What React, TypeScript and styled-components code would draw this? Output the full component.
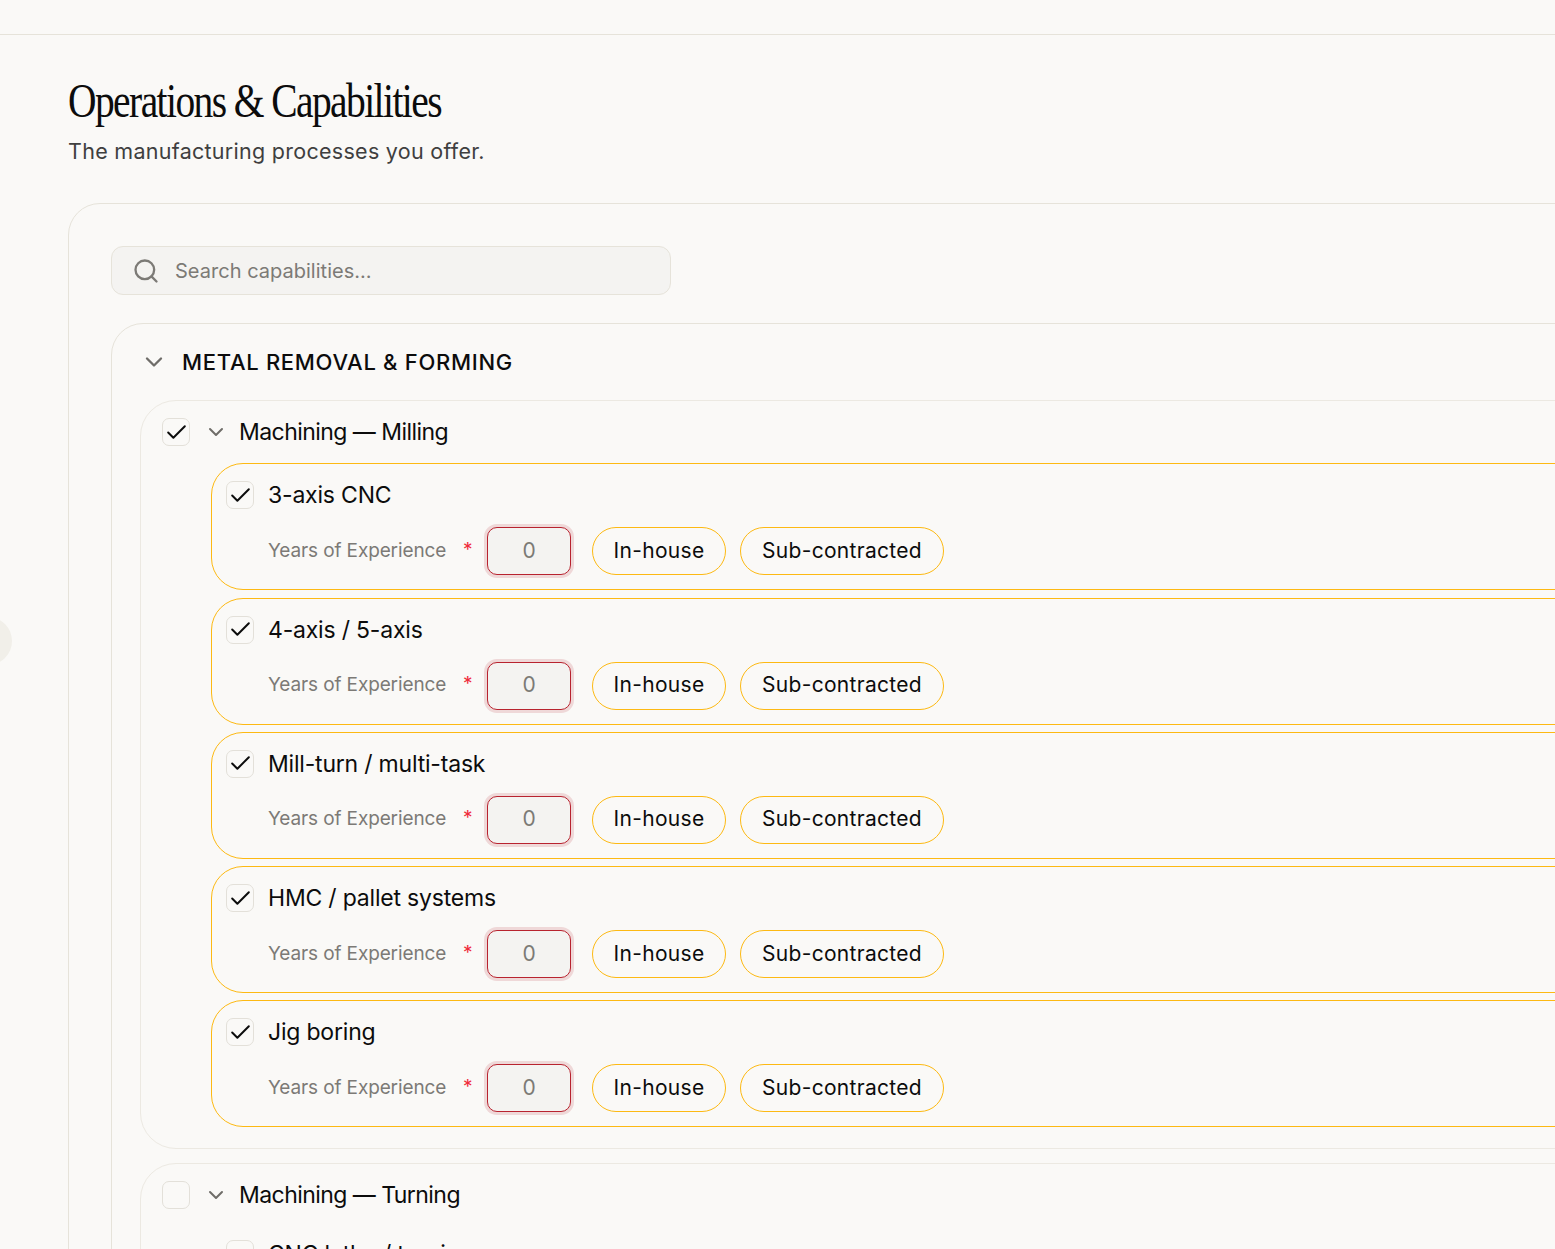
import { createGlobalStyle, styled } from 'styled-components'
import { Check, ChevronDown, Search } from 'lucide-react'

const GlobalStyle = createGlobalStyle`
  html, body {
    margin: 0;
    height: 100%;
    overflow: hidden;
    background: #faf9f7;
  }
  * {
    box-sizing: border-box;
  }
`

const Page = styled.div`
  width: 1900px;
  height: 1249px;
  overflow: hidden;
  color: #0c0c0c;
  font-family: Inter, 'Noto Sans', sans-serif;
`

const TopBar = styled.header`
  height: 35px;
  border-bottom: 1px solid #e6e3da;
`

const SideHandle = styled.span`
  position: absolute;
  left: -36px;
  top: 617px;
  width: 48px;
  height: 48px;
  border-radius: 50%;
  background: #f1efe9;
`

const Main = styled.main`
  padding: 40px 68px 0;
`

const Title = styled.h1`
  margin: 0;
  font-family: 'Liberation Serif', serif;
  font-size: 48px;
  font-weight: 400;
  line-height: 52px;
  letter-spacing: -1.9px;
  transform: scaleX(0.822);
  transform-origin: left center;
  white-space: nowrap;
`

const Subtitle = styled.p`
  margin: 10px 0 0;
  font-size: 21.5px;
  line-height: 28px;
  letter-spacing: 0.28px;
  color: #3f3f3f;
`

const Panel = styled.section`
  margin-top: 38px;
  padding: 42px 42px 0;
  border: 1px solid #e6e3da;
  border-radius: 32px;
`

const SearchBox = styled.label`
  width: 560px;
  height: 49px;
  padding: 0 20px;
  display: flex;
  align-items: center;
  gap: 15px;
  border: 1px solid #e6e3da;
  border-radius: 12px;
  background: #f4f3f1;
  color: #7c7a76;

  svg {
    flex: none;
  }
`

const SearchInput = styled.input`
  flex: 1;
  min-width: 0;
  border: 0;
  padding: 0;
  outline: none;
  background: transparent;
  font: inherit;
  font-size: 20px;
  letter-spacing: 0.02px;

  &::placeholder {
    color: #7c7a76;
    opacity: 1;
  }
`

const Section = styled.section`
  margin-top: 28px;
  padding: 0 28px;
  border: 1px solid #e6e3da;
  border-radius: 32px;
`

const SectionHeader = styled.div`
  height: 76px;
  display: flex;
  align-items: center;
  gap: 14px;
  color: #6f6d69;
`

const SectionTitle = styled.h2`
  margin: 0;
  font-size: 22px;
  font-weight: 500;
  letter-spacing: 0.7px;
  color: #0c0c0c;
`

const Group = styled.div`
  margin-bottom: 14px;
  padding: 0 0 20.6px 21px;
  border: 1px solid #ece9e2;
  border-radius: 36px;
`

const GroupHeader = styled.div`
  height: 62.4px;
  display: flex;
  align-items: center;
  color: #6f6d69;
`

const GroupChevron = styled.span`
  margin: 0 11px 0 14px;
  display: flex;
`

const GroupTitle = styled.h3`
  margin: 0;
  font-size: 23px;
  font-weight: 400;
  letter-spacing: -0.55px;
  color: #0c0c0c;
`

const Box = styled.span`
  flex: none;
  width: 28px;
  height: 28px;
  display: flex;
  align-items: center;
  justify-content: center;
  border: 1px solid #e3e0d9;
  border-radius: 7px;
  color: #0c0c0c;
`

const ItemList = styled.div`
  margin-left: 49px;
  display: flex;
  flex-direction: column;
  gap: 7.25px;
`

const Item = styled.article<{ $active?: boolean }>`
  height: 127px;
  padding: ${(p) => (p.$active ? '17px' : '13px')} 0 0 14px;
  border: 1px solid ${(p) => (p.$active ? '#fdb913' : 'transparent')};
  border-radius: 32px;
`

const ItemHeader = styled.div`
  height: 28px;
  display: flex;
  align-items: center;
  gap: 14px;
`

const ItemName = styled.span`
  font-size: 23px;
  letter-spacing: -0.2px;
`

const ItemFields = styled.div`
  margin: 18px 0 0 42px;
  display: flex;
  align-items: center;
`

const FieldLabel = styled.span`
  width: 195px;
  padding-bottom: 2px;
  font-size: 19px;
  letter-spacing: -0.12px;
  color: #7c7a76;
`

const Star = styled.span`
  width: 24px;
  margin-top: -4px;
  font-size: 19px;
  color: #ef2b3c;
`

const YearsInput = styled.input`
  width: 84px;
  height: 48px;
  margin-right: 21px;
  padding: 0 0 2px;
  border: 1px solid #b8232f;
  border-radius: 10px;
  outline: none;
  box-shadow: 0 0 0 3px #efd8d8;
  background: #f4f3f1;
  text-align: center;
  font: inherit;
  font-size: 21px;
  color: #7c7a76;
`

const Pill = styled.button<{ $width: number }>`
  width: ${(p) => p.$width}px;
  height: 48px;
  margin-right: 14px;
  padding: 0 0 2px;
  border: 1px solid #fdb913;
  border-radius: 24px;
  background: transparent;
  font: inherit;
  font-size: 21px;
  letter-spacing: 0.3px;
  color: #0c0c0c;
`

const items = ['3-axis CNC', '4-axis / 5-axis', 'Mill-turn / multi-task', 'HMC / pallet systems', 'Jig boring']

const CheckBox = ({ checked }: { checked?: boolean }) => (
  <Box>{checked && <Check size={25} strokeWidth={1.9} />}</Box>
)

const CapabilityItem = ({ name }: { name: string }) => (
  <Item $active>
    <ItemHeader>
      <CheckBox checked />
      <ItemName>{name}</ItemName>
    </ItemHeader>
    <ItemFields>
      <FieldLabel>Years of Experience</FieldLabel>
      <Star>*</Star>
      <YearsInput defaultValue="0" />
      <Pill $width={134}>In-house</Pill>
      <Pill $width={204}>Sub-contracted</Pill>
    </ItemFields>
  </Item>
)

const App = () => (
  <Page>
    <GlobalStyle />
    <TopBar />
    <SideHandle />
    <Main>
      <Title>Operations &amp; Capabilities</Title>
      <Subtitle>The manufacturing processes you offer.</Subtitle>
      <Panel>
        <SearchBox>
          <Search size={28} strokeWidth={2} />
          <SearchInput placeholder="Search capabilities…" />
        </SearchBox>
        <Section>
          <SectionHeader>
            <ChevronDown size={28} strokeWidth={2} />
            <SectionTitle>METAL REMOVAL &amp; FORMING</SectionTitle>
          </SectionHeader>
          <Group>
            <GroupHeader>
              <CheckBox checked />
              <GroupChevron>
                <ChevronDown size={24} strokeWidth={2} />
              </GroupChevron>
              <GroupTitle>Machining — Milling</GroupTitle>
            </GroupHeader>
            <ItemList>
              {items.map((name) => (
                <CapabilityItem key={name} name={name} />
              ))}
            </ItemList>
          </Group>
          <Group>
            <GroupHeader>
              <CheckBox />
              <GroupChevron>
                <ChevronDown size={24} strokeWidth={2} />
              </GroupChevron>
              <GroupTitle>Machining — Turning</GroupTitle>
            </GroupHeader>
            <ItemList>
              <Item>
                <ItemHeader>
                  <CheckBox />
                  <ItemName>CNC lathe / turning</ItemName>
                </ItemHeader>
              </Item>
            </ItemList>
          </Group>
        </Section>
      </Panel>
    </Main>
  </Page>
)

export default App
